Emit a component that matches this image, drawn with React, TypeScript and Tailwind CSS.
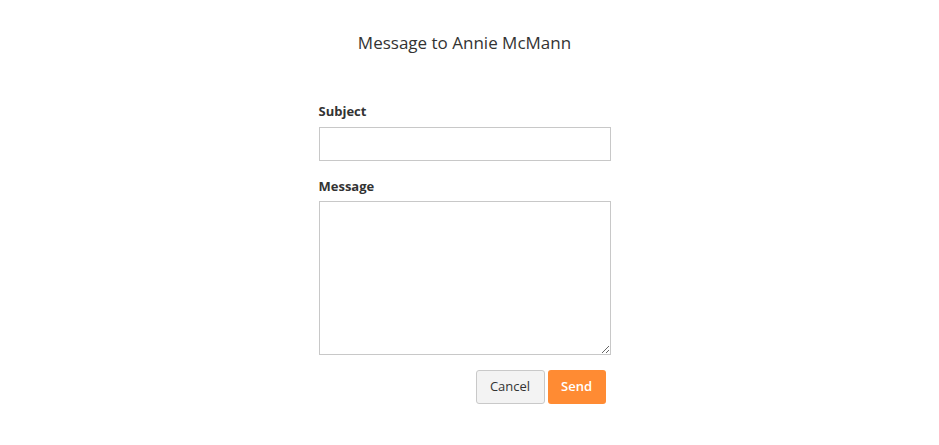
export default function App() {
  return (
    <div className="min-h-[445px] bg-white pr-[10px] font-['Open_Sans',sans-serif] text-[#333]">
      <h1 className="pt-[32px] text-center text-[17px] leading-[22px] text-[#333]">
        Message to Annie McMann
      </h1>
      <form className="mx-auto mt-[48px] w-[292px]" onSubmit={(e) => e.preventDefault()}>
        <label className="block text-[13px] font-bold leading-[18px]">Subject</label>
        <input
          type="text"
          className="mt-[7px] block h-[34px] w-full border border-[#c8c8c8] bg-white px-2 text-[13px] outline-none"
        />
        <label className="mt-[16px] block text-[13px] font-bold leading-[18px]">Message</label>
        <textarea className="mt-[6px] block h-[154px] w-full border border-[#c8c8c8] bg-white px-2 py-1 text-[13px] outline-none" />
        <div className="mt-[15px] flex justify-end gap-[3px] pr-[5px]">
          <button
            type="button"
            className="h-[34px] w-[69px] rounded-[3px] border border-[#c9c9c9] bg-[#f3f3f3] text-[13px] text-[#333]"
          >
            Cancel
          </button>
          <button
            type="submit"
            className="h-[34px] w-[58px] rounded-[3px] bg-[#ff8b33] text-[13px] font-semibold text-white"
          >
            Send
          </button>
        </div>
      </form>
    </div>
  );
}
